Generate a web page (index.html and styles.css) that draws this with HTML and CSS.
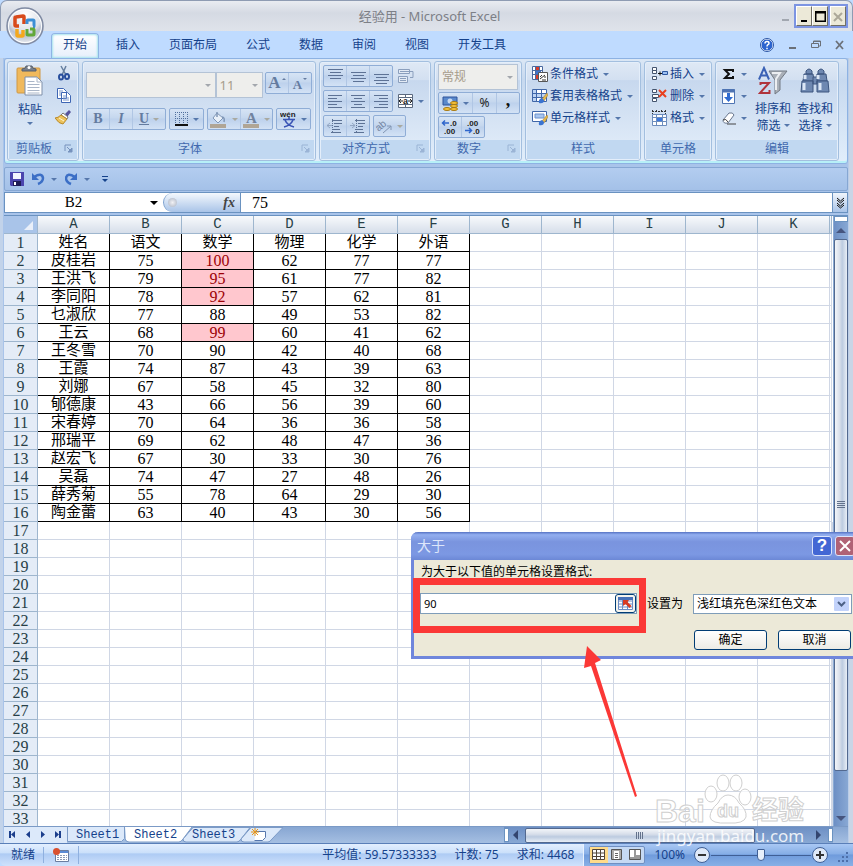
FILE: index.html
```html
<!DOCTYPE html>
<html lang="zh-CN">
<head>
<meta charset="utf-8">
<title>经验用 - Microsoft Excel</title>
<link rel="stylesheet" href="styles.css">
</head>
<body>
<div class="window">
<header class="titlebar">
  <h1>经验用 - Microsoft Excel</h1>
  <span class="dash"></span>
  <div class="winbtns">
    <button aria-label="最小化"><svg width="14" height="18"><path d="M4 13h6v2H4z"/></svg></button>
    <button aria-label="最大化"><svg width="14" height="18"><path d="M2 4h11v11H2zM3.500 6.500v7h8v-7z" fill-rule="evenodd"/></svg></button>
    <button class="off" aria-label="关闭"><svg width="14" height="18"><path d="M3 6l8 8M11 6l-8 8" stroke="#aca899" stroke-width="2"/></svg></button>
  </div>
</header>
<button class="office" aria-label="Office 按钮"><svg width="38" height="38" viewBox="0 0 38 38">
  <defs><radialGradient id="orb" cx=".5" cy=".2" r=".9"><stop offset="0" stop-color="#fff"/><stop offset=".5" stop-color="#dfe3ea"/><stop offset=".62" stop-color="#b9c1d0"/><stop offset="1" stop-color="#fff"/></radialGradient></defs>
  <circle cx="19" cy="19" r="18" fill="url(#orb)" stroke="#808ba3" stroke-width="1.500"/><circle cx="19" cy="19" r="16.500" fill="none" stroke="#fff"/>
  <g fill="none" stroke-width="3.500"><path d="M18 17v-7q0-1-1-1l-7 1q-1 0-1 1v7q0 1 1 1h3" stroke="#d84a1b"/><path d="M21 17v-3q0-1 1-1h5q1 0 1 1v5q0 1-1 1" stroke="#3b8fd6" stroke-width="3"/><path d="M11 22v6q0 1 1 1h4q1 0 1-1v-5" stroke="#f5a81c"/><path d="M21 22v5q0 1 1 1h5q1 0 1-1v-4q0-1-1-1h-3" stroke="#62a83a" stroke-width="3"/></g></svg></button>
<nav class="tabs">
  <a class="on" href="#">开始</a><a href="#">插入</a><a href="#">页面布局</a><a href="#">公式</a><a href="#">数据</a><a href="#">审阅</a><a href="#">视图</a><a href="#">开发工具</a>
  <span class="grow"></span>
  <div class="docbtns">
    <button aria-label="帮助"><svg width="14" height="14"><circle cx="7" cy="7" r="6" fill="#2c64cf" stroke="#fff"/><circle cx="7" cy="7" r="6.500" fill="none" stroke="#2b56a5"/><path d="M5 5.500q0-2 2-2t2 1.700q0 1-1 1.500T7 8.500M7 9.800v1.500" fill="none" stroke="#fff" stroke-width="1.500"/></svg></button>
    <button aria-label="最小化工作簿"><svg width="10" height="12"><path d="M2 8h7v2H2z" fill="#6b7078"/></svg></button>
    <button aria-label="还原工作簿"><svg width="12" height="12"><path d="M3.500 4.500V2h7v5H8.500M1.500 4.500h7v4h-7zM3 2.500h8" fill="none" stroke="#6b7078"/></svg></button>
    <button aria-label="关闭工作簿"><svg width="10" height="12"><path d="M1 2l7 8M8 2l-7 8" stroke="#6b7078" stroke-width="1.800"/></svg></button>
  </div>
</nav>
<main class="frame">
<div class="ribbon">
  <section class="group g-clip"><div class="body row">
    <button class="big paste"><svg width="28" height="32" viewBox="0 0 28 32"><rect x="1" y="3" width="23" height="25" rx="1" fill="#f0b95c" stroke="#cf9845"/><path d="M6 6h14V4q-4 0-4-3h-6q0 3-4 3z" fill="#777f8b" stroke="#555e6c"/><circle cx="13" cy="2.500" r="1.500" fill="#fff"/><path d="M9 12h12l5 5v13H9z" fill="#fff" stroke="#7f8fa9"/><path d="M21 12v5h5M11.500 16.500h7M11.500 19.500h12M11.500 22.500h12M11.500 25.500h12M11.500 28h12" fill="none" stroke="#aab6c8"/></svg><span>粘贴</span><i class="car"></i></button>
    <div class="col cliptools">
      <button aria-label="剪切"><svg width="14" height="16"><path d="M4 1l5 9M9 1L5 10" stroke="#667f9f" stroke-width="1.500"/><g fill="none" stroke="#294f9d" stroke-width="2"><ellipse cx="4" cy="12" rx="2" ry="2.500"/><ellipse cx="10" cy="11.500" rx="2" ry="2.500"/></g></svg></button>
      <button aria-label="复制"><svg width="16" height="16"><path d="M1.500 1.500h6l3 3v7h-9zM5.500 5.500h6l3 3v7h-9z" fill="#fff" stroke="#3e66b4"/><path d="M3 4h4M3 6h2M3 8h2M7 9h4M7 11h6M7 13h6" stroke="#7a97cc"/></svg></button>
      <button aria-label="格式刷"><svg width="17" height="16"><path d="M10 5l4-4 2 2-4 5z" fill="#56549c"/><path d="M8 4l5 4-1 2-6-4z" fill="#fff" stroke="#777"/><path d="M6 6l6 4-4 5q-4 0-8-6 3 0 6-3z" fill="#ecc35e" stroke="#b98a2b"/><path d="M4 9l5 3" stroke="#fff6d0"/></svg></button>
    </div></div><footer>剪贴板<svg class="launch" width="9" height="9"><path d="M1 7V1h6" fill="none" stroke="#7692bd"/><path d="M3 3l3 3M8 4v4H4z" fill="#7692bd" stroke="#7692bd"/></svg></footer></section>
  <section class="group g-font"><div class="body col fontrows">
    <div class="row"><label class="combo ff"><select disabled aria-label="字体"><option></option></select></label><label class="combo fs"><select disabled aria-label="字号"><option>11</option></select></label>
      <div class="set push"><button aria-label="增大字号"><b class="ser a1">A</b><i class="tip up1"></i></button><button aria-label="减小字号"><b class="ser a2">A</b><i class="tip dn1"></i></button></div></div>
    <div class="row g3"><div class="set"><button class="ser" aria-label="加粗"><b>B</b></button><button class="ser" aria-label="倾斜"><i>I</i></button><button class="ser wide" aria-label="下划线"><u>U</u><i class="car dim"></i></button></div>
      <div class="set"><button class="w34" aria-label="边框"><svg width="14" height="14"><path d="M.5 0v12M4.500 0v12M8.500 0v12M12.500 0v12M0 .5h13M0 6.500h13" stroke="#51709c" stroke-dasharray="1 1"/><path d="M0 13h13" stroke="#111" stroke-width="2"/></svg><i class="car"></i></button></div>
      <div class="set"><button class="w33" aria-label="填充颜色"><svg width="17" height="17"><path d="M7 2l6 5-5 5-5-5z" fill="#e9f0f8" stroke="#8097b7"/><path d="M7 1v5M12 6q3 0 2 5" fill="none" stroke="#8097b7" stroke-width="1.500"/><path d="M0 13h16v4H0z" fill="#b0a595"/></svg><i class="car dim"></i></button><button class="w33" aria-label="字体颜色"><svg width="16" height="17"><path d="M0 13h16v4H0z" fill="#b0a595"/><text x="3" y="12" class="sa">A</text></svg><i class="car dim"></i></button></div>
      <div class="set"><button class="w34" aria-label="拼音指南"><svg width="17" height="19"><text x="0" y="7" class="wen">wén</text><path d="M3 9.500h12M9 7v2M13 10q-2 5-9 7M5 10q2 5 9 7" fill="none" stroke="#3953b4" stroke-width="1.600"/></svg><i class="car"></i></button></div></div>
    </div><footer>字体<svg class="launch dim" width="9" height="9"><path d="M1 7V1h6" fill="none" stroke="#7692bd"/><path d="M3 3l3 3M8 4v4H4z" fill="#7692bd" stroke="#7692bd"/></svg></footer></section>
  <section class="group g-align"><div class="body col alignrows">
    <div class="row g5"><div class="set"><button aria-label="顶端对齐"><svg width="15" height="14"><path d="M0 .5h15M2 3.500h11M0 6.500h15M2 9.500h11" stroke="#5d7295"/></svg></button><button aria-label="垂直居中"><svg width="15" height="14"><path d="M0 3.500h15M2 6.500h11M0 9.500h15M2 12.500h11" stroke="#5d7295"/></svg></button><button aria-label="底端对齐"><svg width="15" height="16"><path d="M0 6.500h15M2 9.500h11M0 12.500h15M2 15.500h11" stroke="#5d7295"/></svg></button></div>
      <button class="bare" aria-label="自动换行"><svg width="17" height="16"><path d="M.5 1.500h11v4H.5zM.5 8.500h9v6h-9z" fill="#e4ebf5" stroke="#8b9fbd"/><path d="M2 3.500h13v6h-3M2 10.500h6M2 12.500h6" fill="none" stroke="#8b9fbd"/></svg></button></div>
    <div class="row g5"><div class="set"><button aria-label="左对齐"><svg width="15" height="14"><path d="M0 1.500h14M0 4.500h9M0 7.500h14M0 10.500h9M0 13.500h14" stroke="#5d7295"/></svg></button><button aria-label="居中"><svg width="15" height="14"><path d="M0 1.500h14M3 4.500h8M0 7.500h14M3 10.500h8M0 13.500h14" stroke="#5d7295"/></svg></button><button aria-label="右对齐"><svg width="15" height="14"><path d="M0 1.500h14M5 4.500h9M0 7.500h14M5 10.500h9M0 13.500h14" stroke="#5d7295"/></svg></button></div>
      <button class="bare" aria-label="合并后居中"><svg width="16" height="16"><path d="M.5 1.500h14v13H.5zM7.500 1v3M7.500 12v3" fill="#fff" stroke="#5c6a80"/><path d="M0 4.500h15M0 11.500h15" stroke="#5c6a80"/><text x="5" y="11" class="t9">a</text><path d="M1 8h4M10 8h4M3 6L1 8l2 2M12 6l2 2-2 2" stroke="#222" fill="none"/></svg><i class="car"></i></button></div>
    <div class="row g3"><div class="set"><button aria-label="减少缩进"><svg width="16" height="14"><path d="M5 1.500h10M7 4.500h8M7 7.500h5M5 10.500h8M4 13.500h10" stroke="#5d7295"/><path d="M0 6.500h5M3 4L0 6.500 3 9" fill="none" stroke="#93a7c4"/><path d="M5.500 0v14" stroke="#5d7295" stroke-dasharray="1 1"/></svg></button><button aria-label="增加缩进"><svg width="16" height="14"><path d="M5 1.500h10M8 4.500h7M8 7.500h5M5 10.500h8M4 13.500h10" stroke="#5d7295"/><path d="M0 6.500h5M2 4l3 2.500L2 9" fill="none" stroke="#93a7c4"/><path d="M6.500 0v14" stroke="#5d7295" stroke-dasharray="1 1"/></svg></button></div>
      <div class="set"><button class="w31" aria-label="方向"><svg width="17" height="18"><text x="0" y="12" class="rot">ab</text><path d="M7 16l8-7M15 13V9h-4" fill="none" stroke="#8296b3"/></svg><i class="car dim"></i></button></div></div>
    </div><footer>对齐方式<svg class="launch dim" width="9" height="9"><path d="M1 7V1h6" fill="none" stroke="#7692bd"/><path d="M3 3l3 3M8 4v4H4z" fill="#7692bd" stroke="#7692bd"/></svg></footer></section>
  <section class="group g-num"><div class="body col numrows">
    <label class="combo nf"><select disabled aria-label="数字格式"><option>常规</option></select></label>
    <div class="row"><div class="set"><button class="w34" aria-label="会计数字格式"><svg width="17" height="17"><path d="M1 2h14v8H1z" fill="#5a89cc" stroke="#2f559a"/><circle cx="8" cy="6" r="2.500" fill="#c8daf2"/><g fill="#f6c33c" stroke="#a67812"><ellipse cx="12" cy="8" rx="3.500" ry="1.500"/><ellipse cx="12" cy="11" rx="3.500" ry="1.500"/><ellipse cx="12" cy="14" rx="3.500" ry="1.500"/><ellipse cx="5" cy="14" rx="3.500" ry="1.500"/></g></svg><i class="car"></i></button><button class="pct">%</button><button class="comma" aria-label="千位分隔">,</button></div></div>
    <div class="row"><div class="set"><button aria-label="增加小数位数"><svg width="18" height="16"><text x="9" y="7" class="t8">.0</text><text x="3" y="15" class="t8">.00</text><path d="M2 4h6M4 1.500L1.500 4 4 6.500" stroke="#2f66cc" fill="none" stroke-width="1.500"/></svg></button><button aria-label="减少小数位数"><svg width="18" height="16"><text x="3" y="7" class="t8">.00</text><text x="9" y="15" class="t8">.0</text><path d="M1 11.500h6M5 9l2.500 2.500L5 14" stroke="#2f66cc" fill="none" stroke-width="1.500"/></svg></button></div></div>
    </div><footer>数字<svg class="launch dim" width="9" height="9"><path d="M1 7V1h6" fill="none" stroke="#7692bd"/><path d="M3 3l3 3M8 4v4H4z" fill="#7692bd" stroke="#7692bd"/></svg></footer></section>
  <section class="group g-style"><div class="body col lines">
    <button><svg width="16" height="16"><path d="M.5.500h10v13H.5zM0 4.500h10M0 8.500h10M3.500 0v13M7.500 0v13" fill="#fff" stroke="#49699f"/><path d="M4 1h3v3H4zM4 9h3v4H4z" fill="#d73c2b"/><path d="M4 5h5v3H4z" fill="#3f72cb"/><path d="M6.500 6.500h9v9h-9z" fill="#fff" stroke="#555"/><path d="M8 11l2-2M8 13l5-4M10 14h4M12 11h2" stroke="#333"/></svg>条件格式<i class="car"></i></button>
    <button><svg width="16" height="16"><path d="M.5 1.500h14v12H.5z" fill="#fff" stroke="#3f66a8"/><path d="M1 2h4v11H1zM5 5h9v4H5z" fill="#bed4f3"/><path d="M0 5.500h14M0 9.500h14M4.500 1v13M9.500 1v13" stroke="#3f66a8"/><path d="M15 5l-5 6 2 2 4-6z" fill="#e7b94c" stroke="#99742a" stroke-width=".5"/><path d="M10 10q-4 1-3 5 5 1 5-3z" fill="#3b74d0"/></svg>套用表格格式<i class="car"></i></button>
    <button><svg width="16" height="16"><path d="M.5 1.500h14v10H.5z" fill="#fff" stroke="#3f66a8"/><path d="M3 4h9v4H3z" fill="#a9c6ef" stroke="#6b91cc"/><path d="M15 5l-5 6 2 2 4-6z" fill="#e7b94c" stroke="#99742a" stroke-width=".5"/><path d="M10 10q-4 1-3 5 5 1 5-3z" fill="#3b74d0"/></svg>单元格样式<i class="car"></i></button>
    </div><footer>样式</footer></section>
  <section class="group g-cells"><div class="body col lines">
    <button><svg width="17" height="14"><path d="M1.500.500h4v3h-4zM1.500 9.500h4v3h-4zM1.500 3.500h4v3h-4z" fill="#fff" stroke="#44546e"/><path d="M7 6.500h4M9 4.500v4" stroke="#111" fill="none"/><path d="M11.500 4.500h5v3h-5z" fill="#9dc0f2" stroke="#2d579f"/></svg>插入<i class="car"></i></button>
    <button><svg width="17" height="14"><path d="M1.500.500h4v3h-4zM1.500 9.500h4v3h-4zM1.500 5.500h6v3h-6z" fill="#fff" stroke="#44546e"/><path d="M8 1l7 7M15 1L8 8" stroke="#e8401f" stroke-width="2"/></svg>删除<i class="car"></i></button>
    <button><svg width="17" height="16"><path d="M1 1.500h14M1.500 0v4M5.500 0v3M10.500 0v3M14.500 0v4" stroke="#333" stroke-dasharray="2 1"/><path d="M1.500 4.500h14v11h-14zM2 7.500h13M2 11.500h13M5.500 5v10M11.500 5v10" fill="#fff" stroke="#6d8dbd"/><path d="M6 8h5v3H6z" fill="#3c78dc"/></svg>格式<i class="car"></i></button>
    </div><footer>单元格</footer></section>
  <section class="group g-edit"><div class="body row">
    <div class="col lines tight"><button aria-label="求和"><svg width="14" height="14"><path d="M11 5V3H3l4 4-4 4h8V9" fill="none" stroke="#111" stroke-width="2"/></svg><i class="car"></i></button><button aria-label="填充"><svg width="14" height="15"><path d="M.5.500h12v14H.5z" fill="#fff" stroke="#4f74b3"/><path d="M0 2h13" stroke="#4f74b3" stroke-width="3"/><path d="M5 4h3v4h3l-4.500 5L2 8h3z" fill="#2f6bd0"/></svg><i class="car"></i></button><button aria-label="清除"><svg width="14" height="14"><path d="M1 9l6-7q4-1 5 2l-6 8q-5 1-5-3z" fill="#fff" stroke="#68768e"/><path d="M1 9q3-2 5 2M5 13h9" fill="none" stroke="#444"/></svg><i class="car"></i></button></div>
    <button class="big"><svg width="30" height="30"><path d="M11 5h18l-7 9v10l-5 4V14z" fill="#aab0b8" stroke="#737a84"/><path d="M14 7h8l-4 6v11" fill="none" stroke="#eceef1" stroke-width="2"/><g fill="none" stroke-width="2"><path d="M1 13.500L6 2l5 11.500M3 9.500h6" stroke="#3b62b5"/><path d="M2.500 19V17H11L2 27h9.500v-3" stroke="#b0343c"/></g></svg><span>排序和<br>筛选 <i class="car"></i></span></button>
    <button class="big"><svg width="30" height="30"><g fill="#6e88b1" stroke="#3c557e"><path d="M6 5q3-4 6 0v3H6zM18 5q3-4 6 0v3h-6zM4 8h9l1 7H3zM17 8h9l1 7H16z"/><path d="M2 15h11v11H1zM17 15h11l1 11H17zM13 11h4v7h-4z"/></g><path d="M5 9v4M18 9v4M4 17v7M20 17v7" stroke="#dbe6f5" stroke-width="3"/></svg><span>查找和<br>选择 <i class="car"></i></span></button>
    </div><footer>编辑</footer></section>
</div>
<div class="qat">
  <button aria-label="保存"><svg width="14" height="14"><path d="M0 0h14v14H1l-1-1z" fill="#4b45ae"/><path d="M3 1h8v6H3z" fill="#f4f6ff"/><path d="M3 9h8v5H3z" fill="#1f1c55"/><path d="M4 10h2v3H4z" fill="#fff"/></svg></button>
  <button aria-label="撤消"><svg width="13" height="14"><path d="M2 5q8-5 9 1 0 4-5 6" fill="none" stroke="#3c6fc6" stroke-width="2.500"/><path d="M0 1v7h7z" fill="#3c6fc6"/></svg></button><i class="car"></i>
  <button aria-label="恢复"><svg width="13" height="14"><path d="M10 5Q2 0 1 6q0 4 5 6" fill="none" stroke="#3c6fc6" stroke-width="2.500"/><path d="M12 1v7H5z" fill="#3c6fc6"/></svg></button><i class="car"></i>
  <button class="more" aria-label="自定义快速访问工具栏"><i class="car dark"></i></button>
</div>
<div class="fbar">
  <label class="namebox"><input aria-label="名称框" value="B2"><i class="car blk"></i></label>
  <button class="fx" aria-label="插入函数"><i class="dot"></i><em>fx</em></button>
  <input class="formula" aria-label="编辑栏" value="75">
  <button class="expand" aria-label="展开编辑栏"><svg width="9" height="12"><path d="M1 1l3.500 3L8 1M1 3l3.500 3L8 3M1 6l3.500 3L8 6M1 8l3.500 3L8 8" fill="none" stroke="#111"/></svg></button>
</div>
<div class="work">
<div class="sheet">
<table>
<colgroup><col class="cn"><col class="c"><col class="c"><col class="c"><col class="c"><col class="c"><col class="c"><col class="c"><col class="c"><col class="c"><col class="c"><col class="c"><col></colgroup>
<thead><tr><th class="corner"><svg width="10" height="10"><path d="M9 0v9H0z" fill="#e9eff9"/></svg></th><th>A</th><th>B</th><th>C</th><th>D</th><th>E</th><th>F</th><th>G</th><th>H</th><th>I</th><th>J</th><th>K</th><th></th></tr></thead>
<tbody class="data">
<tr><th>1<td>姓名<td>语文<td>数学<td>物理<td>化学<td>外语<td><td><td><td><td><td>
<tr><th>2<td>皮桂岩<td>75<td class="hot">100<td>62<td>77<td>77<td><td><td><td><td><td>
<tr><th>3<td>王洪飞<td>79<td class="hot">95<td>61<td>77<td>82<td><td><td><td><td><td>
<tr><th>4<td>李同阳<td>78<td class="hot">92<td>57<td>62<td>81<td><td><td><td><td><td>
<tr><th>5<td>乜淑欣<td>77<td>88<td>49<td>53<td>82<td><td><td><td><td><td>
<tr><th>6<td>王云<td>68<td class="hot">99<td>60<td>41<td>62<td><td><td><td><td><td>
<tr><th>7<td>王冬雪<td>70<td>90<td>42<td>40<td>68<td><td><td><td><td><td>
<tr><th>8<td>王霞<td>74<td>87<td>43<td>39<td>63<td><td><td><td><td><td>
<tr><th>9<td>刘娜<td>67<td>58<td>45<td>32<td>80<td><td><td><td><td><td>
<tr><th>10<td>郇德康<td>43<td>66<td>56<td>39<td>60<td><td><td><td><td><td>
<tr><th>11<td>宋春婷<td>70<td>64<td>36<td>36<td>58<td><td><td><td><td><td>
<tr><th>12<td>邢瑞平<td>69<td>62<td>48<td>47<td>36<td><td><td><td><td><td>
<tr><th>13<td>赵宏飞<td>67<td>30<td>33<td>30<td>76<td><td><td><td><td><td>
<tr><th>14<td>吴磊<td>74<td>47<td>27<td>48<td>26<td><td><td><td><td><td>
<tr><th>15<td>薛秀菊<td>55<td>78<td>64<td>29<td>30<td><td><td><td><td><td>
<tr><th>16<td>陶金蕾<td>63<td>40<td>43<td>30<td>56<td><td><td><td><td><td>
</tbody>
<tbody>
<tr><th>17<td><td><td><td><td><td><td><td><td><td><td><td><td>
<tr><th>18<td><td><td><td><td><td><td><td><td><td><td><td><td>
<tr><th>19<td><td><td><td><td><td><td><td><td><td><td><td><td>
<tr><th>20<td><td><td><td><td><td><td><td><td><td><td><td><td>
<tr><th>21<td><td><td><td><td><td><td><td><td><td><td><td><td>
<tr><th>22<td><td><td><td><td><td><td><td><td><td><td><td><td>
<tr><th>23<td><td><td><td><td><td><td><td><td><td><td><td><td>
<tr><th>24<td><td><td><td><td><td><td><td><td><td><td><td><td>
<tr><th>25<td><td><td><td><td><td><td><td><td><td><td><td><td>
<tr><th>26<td><td><td><td><td><td><td><td><td><td><td><td><td>
<tr><th>27<td><td><td><td><td><td><td><td><td><td><td><td><td>
<tr><th>28<td><td><td><td><td><td><td><td><td><td><td><td><td>
<tr><th>29<td><td><td><td><td><td><td><td><td><td><td><td><td>
<tr><th>30<td><td><td><td><td><td><td><td><td><td><td><td><td>
<tr><th>31<td><td><td><td><td><td><td><td><td><td><td><td><td>
<tr><th>32<td><td><td><td><td><td><td><td><td><td><td><td><td>
<tr><th>33<td><td><td><td><td><td><td><td><td><td><td><td><td>
</tbody>
</table>
</div>
<div class="vscroll"><i class="split"></i><i class="arr up"></i><div class="track"><div class="thumb"><i></i></div></div><i class="arr down"></i></div>
</div>
<div class="sheetbar">
  <div class="navs"><svg width="54" height="9" fill="#1c3f8c"><path d="M0 1h2v7H0zM6 1v7L2 4.500zM21 1v7l-4-3.500zM32 1v7l4-3.500zM46 1v7l4-3.500zM50 1h2v7h-2z"/></svg></div>
  <a class="st" href="#"><svg width="58" height="16"><path d="M.5 0v14.500h54l3-3V0" fill="#dce9fa" stroke="#7b9ac6"/></svg><span>Sheet1</span></a>
  <a class="st on" href="#"><svg width="68" height="16"><path d="M0 0l1 13q1 2 3 2h50q2 0 4-3L67 0z" fill="#fff"/><path d="M0 12q1 3 4 3h50q2 0 4-3L67 0" fill="none" stroke="#7b9ac6"/></svg><span>Sheet2</span></a>
  <a class="st" href="#"><svg width="68" height="16"><path d="M10 .500L0 12q0 3 3 3h51q2 0 4-3L67 .500z" fill="#dce9fa" stroke="#7b9ac6"/></svg><span>Sheet3</span></a>
  <a class="st new" href="#" aria-label="插入工作表"><svg width="42" height="16"><path d="M10 .500L0 12q0 3 3 3h24q2 0 4-3L42 .500z" fill="#dce9fa" stroke="#7b9ac6"/><path d="M14.500 4.500h10v6l-3 3h-8" fill="#fff" stroke="#5677ad"/><path d="M14 1v8M10 5h8M11 2l6 6M17 2l-6 6" stroke="#e4951d"/></svg></a>
  <span class="grow"></span>
  <div class="hscroll"><i class="split"></i><i class="arr left"></i><div class="track"><div class="thumb"><i></i></div></div><i class="arr right"></i><i class="split"></i></div>
</div>
</main>
<footer class="status">
  <span class="ready">就绪</span><span class="macro"><svg width="16" height="14"><path d="M2.500 2.500h13v11h-13z" fill="#fff" stroke="#6a7da0"/><path d="M3 3h12v2H3z" fill="#5b8bd5"/><path d="M4 7.500h10M4 9.500h10M4 11.500h10" stroke="#8a99b5" stroke-dasharray="2 1"/><circle cx="3.500" cy="3.500" r="3.500" fill="#d9502f"/></svg></span>
  <span class="grow"></span>
  <span class="stats"><span>平均值: 59.57333333</span><span>计数: 75</span><span>求和: 4468</span></span>
  <div class="viewzone">
    <div class="views"><button class="on" aria-label="普通"><svg width="14" height="12"><path d="M.5.500h12v10H.5zM0 4h13M0 7.500h13M4.500 0v11M8.500 0v11" fill="#fff" stroke="#53473a"/></svg></button><button aria-label="页面布局"><svg width="12" height="12"><path d="M.5.500h10v10H.5z" fill="#aaa" stroke="#555"/><path d="M3 2h5v8H3z" fill="#fff"/><path d="M4 4.500h3M4 6.500h3M4 8.500h3" stroke="#666"/></svg></button><button aria-label="分页预览"><svg width="13" height="12"><path d="M.5.500h11v10H.5z" fill="#999" stroke="#555"/><path d="M1 1h4v7H1zM7 1h4v5H7z" fill="#fff"/></svg></button></div>
    <span class="pc">100%</span>
    <button aria-label="缩小"><svg width="18" height="18"><circle cx="9" cy="9" r="7.500" fill="#dfe9f8" stroke="#3f5f96"/><path d="M5 9h8" stroke="#333" stroke-width="2"/></svg></button>
    <input type="range" min="10" max="190" value="100" aria-label="显示比例">
    <button aria-label="放大"><svg width="18" height="18"><circle cx="9" cy="9" r="7.500" fill="#dfe9f8" stroke="#3f5f96"/><path d="M5 9h8M9 5v8" stroke="#333" stroke-width="2"/></svg></button>
    <svg class="grip" width="12" height="12" fill="#4d6fa9"><path d="M9 1h2v2H9zM9 5h2v2H9zM9 9h2v2H9zM5 5h2v2H5zM5 9h2v2H5zM1 9h2v2H1z"/></svg>
  </div>
</footer>
<svg class="mark" width="160" height="84"><g fill="#fff" fill-opacity=".75" stroke="#cfcfcf"><ellipse cx="57" cy="28" rx="6" ry="8"/><ellipse cx="69" cy="17" rx="6" ry="8"/><ellipse cx="82" cy="17" rx="6" ry="8"/><ellipse cx="91" cy="31" rx="6" ry="8"/><path d="M74 29q7 0 11 8 8 7 7 14-2 7-18 6-17 1-18-6 0-7 8-14 4-8 10-8z"/><text x="1" y="56" class="m1">Bai</text><text x="63" y="51" class="m2">du</text><text x="98" y="53" class="m3">经验</text></g><text x="3" y="76" class="m4">jingyan.baidu.com</text></svg>
<form class="dialog">
  <header><h2>大于</h2><button type="button" class="q" aria-label="帮助">?</button><button type="button" class="x" aria-label="关闭"><svg width="14" height="14"><path d="M2 2l10 10M12 2L2 12" stroke="#fff" stroke-width="2"/></svg></button></header>
  <div class="dbody"><label for="v">为大于以下值的单元格设置格式:</label>
    <div class="drow"><span class="ref"><input id="v" value="90"><button type="button" aria-label="选取区域"><svg width="16" height="13"><path d="M.5.500h14v12H.5zM0 4h15M0 7h15M0 10h15M4.500 0v12M9.500 0v12" fill="#fff" stroke="#6c8cc4"/><path d="M0 0h15v3H0z" fill="#4670b8"/><path d="M5 3h6L9.500 5l4 4-2 2-4-4L5 9z" fill="#d93a21"/></svg></button></span>
    <label for="f">设置为</label><span class="pick"><select id="f"><option>浅红填充色深红色文本</option></select><svg width="15" height="14"><rect width="15" height="14" rx="1" fill="#c3d3fb"/><path d="M4 5l3.500 3.500L11 5" fill="none" stroke="#4d6185" stroke-width="2"/></svg></span></div>
    <div class="acts"><button type="button">确定</button><button type="button">取消</button></div></div>
</form>
<div class="redbox"></div>
<svg class="pointer" width="58" height="154"><path d="M5 0l14 14-6 3 42 133-2 1L9 20l-7 2z" fill="#fb3836"/></svg>
</div>
</body>
</html>
```
FILE: styles.css
```css
* { box-sizing: border-box; }
body { margin: 0; font: 12px/16px "Noto Sans", "Noto Sans CJK SC", sans-serif; color: #15428b; }
button, input, select { font: inherit; color: inherit; margin: 0; padding: 0; border: 0; background: none; }
button { display: flex; align-items: center; justify-content: center; }
svg { display: block; flex: none; }
a { color: inherit; text-decoration: none; }
h1, h2 { margin: 0; font-weight: 400; font-size: 12px; }
i { flex: none; }
.row { display: flex; }
.col { display: flex; flex-direction: column; }
.grow { flex: 1; }
.g3 { gap: 3px; }
.g5 { gap: 5px; }
.window { position: relative; height: 100vh; display: flex; flex-direction: column; overflow: hidden; background: #bfdbff; }
.car { display: inline-block; width: 0; height: 0; border: 3px solid transparent; border-top-color: #5577ab; border-bottom: 0; }
.big span .car { vertical-align: 3px; }
.car.dim { border-top-color: #a9a9a0; }
.car.blk { border-width: 4px; border-bottom: 0; border-top-color: #000; }

.titlebar { height: 31px; flex: none; display: flex; align-items: center; border: 1px solid #8e9bb2; border-bottom: 0; border-radius: 7px 7px 0 0; background: linear-gradient(#e9ecf1, #d5dae3 40%, #dfe3ea); padding-right: 4px; }
.titlebar h1 { flex: 1; text-align: center; color: #7d8087; font-size: 13px; padding-left: 76px; }
.dash { width: 7px; height: 2px; background: #a2a7b0; margin: 8px 5px 0 0; }
.winbtns { display: flex; border: 2px solid #7c94e2; background: #7c94e2; }
.winbtns button { width: 16px; height: 20px; background: #ece9d8; border: 1px solid #fff; border-right-color: #716f64; border-bottom-color: #716f64; }
.winbtns .off { margin-left: 2px; }
.office { position: absolute; left: 6px; top: 7px; z-index: 2; }

.tabs { height: 27px; flex: none; display: flex; align-items: stretch; gap: 7px; padding: 2px 8px 0 52px; }
.tabs a { padding: 3px 11px; border: 1px solid transparent; border-bottom: 0; border-radius: 4px 4px 0 0; margin: 0 -1px; }
.tabs .on { background: linear-gradient(#fff, #e6effb); border-color: #8fb4e4; box-shadow: inset 0 0 2px 1px #a8e4ee; }
.docbtns { display: flex; align-items: center; gap: 13px; padding-bottom: 2px; }

.frame { flex: 1; min-height: 0; display: flex; flex-direction: column; padding: 0 5px 0 4px; background: linear-gradient(90deg, #c2d3ea 3px, #a9c4ea 3px, #a9c4ea calc(100% - 5px), #c9d5e6 calc(100% - 4px)); }
.ribbon { flex: none; display: flex; gap: 3px; height: 106px; padding: 2px; border: 1px solid #8db2e3; border-radius: 3px; background: linear-gradient(#dbe7f5, #c7d9ef 20%, #e2eefb); box-shadow: inset 0 -2px #b7f0f8; }
.group { flex: none; height: 100px; display: flex; flex-direction: column; border: 1px solid #a3bfdf; border-radius: 3px; box-shadow: inset 0 0 0 1px #e4eefa; background: linear-gradient(#dfe9f5, #d3e0f1 18%, #c7d8ee 19%, #dde9f7 80%); overflow: hidden; }
.group .body { flex: 1; }
.group footer { height: 19px; margin: 0 1px 1px; position: relative; text-align: center; line-height: 18px; color: #4069ae; background: #c1d8f1; padding-right: 18px; }
.group.g-style footer, .group.g-cells footer, .group.g-edit footer { padding-right: 0; }
.launch { position: absolute; right: 4px; top: 4px; }
.launch.dim { opacity: .5; }
.g-clip { width: 72px; }
.g-font { width: 234px; }
.g-align { width: 112px; }
.g-num { width: 88px; }
.g-style { width: 116px; }
.g-cells { width: 68px; }
.g-edit { width: 124px; }
.big { flex-direction: column; justify-content: flex-start; width: 42px; padding-top: 4px; line-height: 17px; gap: 4px; text-align: center; }
.paste { width: 44px; padding-top: 3px; }
.cliptools { gap: 6px; padding: 3px 0 0 3px; }
.fontrows { padding: 10px 3px 0; gap: 10px; }
.alignrows { padding: 3px 3px 0; gap: 3px; }
.numrows { padding: 2px 3px 0; gap: 2px; }
.combo { position: relative; height: 26px; border: 1px solid #b4c3d6; background: #eeeeec; display: flex; }
.combo::after { content: ""; position: absolute; right: 4px; top: 11px; border: 3px solid transparent; border-top-color: #a3a7ad; border-bottom: 0; }
.combo select { appearance: none; width: 100%; padding-left: 3px; color: #a69c8b; opacity: 1; font-size: 12px; }
.ff { width: 131px; }
.fs { width: 48px; }
.combo.fs select { font-size: 13px; }
.nf { width: 80px; }
.push { margin-left: 2px; }
.set { height: 22px; display: flex; border: 1px solid #8fadd6; border-radius: 2px; background: linear-gradient(#d6e4f5, #c5d7ee 45%, #bdd1ec 50%, #d3e2f5); }
.set button { width: 22px; gap: 4px; }
.set button + button { border-left: 1px solid #b0c6e4; width: 23px; }
.set .wide, .set button.wide { width: 33px; }
.set .w34 { width: 33px; }
.set .w33, .set button.w33 { width: 32px; gap: 5px; }
.set .w31 { width: 31px; }
.ser { font: bold 14px/20px "Liberation Serif", serif; color: #647b9f; }
.a1 { font-size: 17px; }
.a2 { font-size: 13px; padding-top: 3px; }
.tip { width: 0; height: 0; border: 2px solid transparent; align-self: flex-start; margin: 5px 0 0 -3px; }
.up1 { border-bottom-color: #647b9f; border-top: 0; }
.dn1 { border-top-color: #647b9f; border-bottom: 0; }
.sa { font: bold 15px "Liberation Serif", serif; fill: #71839f; }
.wen { font: bold 8px "Liberation Sans", sans-serif; fill: #222; }
.t8 { font: bold 8px "Liberation Sans", sans-serif; fill: #222; }
.t9 { font: bold 9px "Liberation Sans", sans-serif; fill: #222; }
.rot { font: 10px "Liberation Sans", sans-serif; fill: #71839f; transform: rotate(-40deg); transform-origin: 5px 10px; }
.set .pct { width: 24px; color: #222; }
.set .comma { color: #111; font: bold 18px/12px "Liberation Serif", serif; padding-bottom: 6px; }
.bare { gap: 4px; }
.lines { padding: 4px 0 0 6px; gap: 6px; align-items: flex-start; }
.lines button { height: 16px; gap: 2px; }
.lines .car { margin-left: 3px; }
.tight { width: 36px; }

.qat { flex: none; height: 24px; margin-top: 3px; display: flex; align-items: center; gap: 6px; padding: 0 5px; border: 1px solid #86a7d3; border-radius: 2px; background: linear-gradient(#b3cdf0, #a4c1e8); }
.qat button:nth-of-type(2), .qat button:nth-of-type(3) { margin-left: 2px; }
.more { border-top: 1px solid #15428b; padding-top: 2px; margin-left: 6px; }
.car.dark { border-top-color: #15428b; }
.fbar { flex: none; height: 21px; margin-top: 1px; display: flex; border: 1px solid #6a92c0; background: #fff; color: #000; font: 16px/19px "Liberation Serif", serif; }
.namebox { width: 158px; display: flex; align-items: center; padding-right: 5px; }
.namebox input { flex: 1; min-width: 0; text-align: center; font-size: 15px; padding-right: 8px; }
.fx { width: 77px; border-radius: 10px 0 0 10px; border-left: 1px solid #7fa2cf; background: linear-gradient(#f4f8fd, #a9c4e8); justify-content: space-between; padding: 0 5px 0 4px; color: #444; }
.fx em { font: italic bold 14px "Liberation Serif", serif; }
.dot { width: 9px; height: 9px; border-radius: 50%; background: radial-gradient(#f1f1f4, #a9b2c2); }
.formula { flex: 1; min-width: 0; border-left: 1px solid #6a92c0; padding-left: 11px; }
.expand { width: 15px; border-left: 1px solid #6a92c0; background: linear-gradient(#f0f5fc, #a9c4e8); }

.work { flex: 1; min-height: 0; margin-top: 2px; display: flex; border-top: 1px solid #6a92c0; }
.sheet { flex: 1; min-width: 0; overflow: hidden; background: #fff; }
table { width: 100%; table-layout: fixed; border-collapse: separate; border-spacing: 0; color: #000; font: 16px/17px "Liberation Serif", "Noto Sans CJK SC", serif; }
.cn { width: 34px; }
.c { width: 72px; }
tr { height: 18px; }
th, td { height: 18px; padding: 0; text-align: center; font-weight: 400; border-right: 1px solid #d0d7e5; border-bottom: 1px solid #d0d7e5; overflow: hidden; }
td:nth-child(2) { font-size: 15px; }
.data tr:first-child td { font-size: 15px; }
th { background: #e4ecf7; color: #273f47; border-color: #9eb6ce; }
thead th { background: linear-gradient(#f8fafc, #d6deea); font-family: "Liberation Mono", monospace; font-size: 14px; line-height: 17px; }
.corner { background: #a9c4e9; }
.corner svg { margin: 3px 3px 0 auto; }
.data td:nth-child(-n+7) { border-color: #000; }
td.hot { background: #ffc7ce; color: #9c0006; }

.vscroll { width: 15px; flex: none; display: flex; flex-direction: column; background: linear-gradient(90deg, #6d8fc4, #88a8d4); border-left: 1px solid #8aaad4; }
.vscroll .split { height: 6px; border: 1px solid #6a92c0; background: #fff; }
.arr { width: 0; height: 0; border: 5px solid transparent; }
.up { border-bottom-color: #46557e; border-top: 0; margin: 6px 2px; }
.down { border-top-color: #46557e; border-bottom: 0; margin: 5px 2px; }
.vscroll .track { flex: 1; }
.vscroll .thumb { height: 93%; border: 1px solid #53698f; border-radius: 2px; background: linear-gradient(90deg, #f2f5f9, #d7deea 40%, #bccbe0 60%, #e8eef6); display: flex; align-items: center; justify-content: center; }
.vscroll .thumb i { width: 8px; height: 8px; background: repeating-linear-gradient(#63728c 0 1px, #fff0 1px 2px); }
.sheetbar { flex: none; height: 17px; display: flex; background: linear-gradient(#87a6d2, #a5bfe2); border-top: 1px solid #7b9ac6; }
.navs { width: 63px; background: #dce9fa; padding: 3px 5px; }
.st { position: relative; width: 58px; height: 16px; font: 12px/16px "Liberation Mono", monospace; }
.st svg { position: absolute; left: 0; top: 0; }
.st span { position: relative; padding-left: 9px; }
.st.on { z-index: 1; }
.st.new { width: 42px; }
.hscroll { width: 39%; margin-right: 15px; display: flex; align-items: center; background: linear-gradient(#6d8fc4, #88a8d4); }
.hscroll .split { width: 5px; height: 14px; border: 1px solid #6a92c0; background: #fff; }
.left { border-right-color: #33456f; border-left: 0; margin: 0 7px 0 4px; }
.right { border-left-color: #33456f; border-right: 0; margin: 0 7px 0 3px; }
.hscroll .track { flex: 1; height: 15px; }
.hscroll .thumb { width: 80%; height: 15px; border: 1px solid #53698f; border-radius: 2px; background: linear-gradient(#f2f5f9, #d7deea 40%, #bccbe0 60%, #e8eef6); display: flex; align-items: center; justify-content: center; }
.hscroll .thumb i { width: 8px; height: 7px; background: repeating-linear-gradient(90deg, #63728c 0 1px, #fff0 1px 2px); }

.status { flex: none; height: 23px; display: flex; align-items: center; border-top: 1px solid #5a7fb8; border-radius: 0 0 6px 6px; background: linear-gradient(#e3efff, #cbe0fa 40%, #aecbf4 45%, #cfe2fc); }
.ready { padding: 0 8px 0 11px; border-right: 1px solid #8fb0df; }
.macro { padding: 2px 9px; border-right: 1px solid #8fb0df; }
.stats { display: flex; gap: 18px; padding-right: 9px; }
.viewzone { height: 100%; flex: none; display: flex; align-items: center; padding: 0 4px 0 5px; border-left: 1px solid #e9f2ff; background: linear-gradient(#a9c8f4, #86aee6 45%, #6f9bdc 50%, #88b0e6); }
.views { display: flex; border: 1px solid #6f8fc2; border-radius: 2px; background: #c5d9f3; }
.views button { width: 18px; height: 16px; }
.views .on { background: #ffdb8a; }
.pc { padding: 0 8px 0 9px; }
input[type=range] { appearance: none; width: 100px; height: 16px; background: linear-gradient(#3f5f96, #3f5f96) center/100% 1px no-repeat; }
input[type=range]::-webkit-slider-thumb { appearance: none; width: 8px; height: 12px; border: 1px solid #3f5f96; background: #e8f0fb; border-radius: 1px 1px 4px 4px; }
.grip { margin-left: 8px; align-self: flex-end; margin-bottom: 3px; }

.dialog { position: absolute; left: 411px; top: 532px; width: 450px; color: #000; border: 3px solid #6f86dc; border-top: 0; border-radius: 7px 7px 0 0; background: #ece9d8; }
.dialog header { height: 28px; margin: 0 -3px; display: flex; align-items: center; gap: 3px; padding: 0 6px; border-radius: 7px 7px 0 0; background: linear-gradient(#5673c4, #93aff0 10%, #7a94de 35%, #7c98e3 80%, #6c88d6); }
.dialog h2 { flex: 1; color: #dde6fb; font-size: 14px; }
.dialog header button { width: 20px; height: 20px; border: 1px solid #dbe4fb; border-radius: 3px; }
.dialog .q { background: #4367d4; color: #fff; font: bold 17px/18px "Liberation Sans", sans-serif; }
.dialog .x { background: #b06275; }
.dbody { padding: 4px 5px 6px 7px; }
.dbody label { display: block; }
.drow { display: flex; align-items: center; gap: 10px; padding: 13px 0 16px; }
.ref { width: 217px; display: flex; border: 1px solid #7f9db9; background: #fff; margin-left: -1px; }
.ref input { flex: 1; min-width: 0; padding-left: 3px; font-size: 11px; }
.ref button { width: 21px; height: 19px; border: 1px solid #003c74; border-radius: 3px; background: #f4f3ee; }
.pick { position: relative; width: 159px; height: 20px; border: 1px solid #7f9db9; background: #fff; display: flex; }
.pick select { appearance: none; width: 100%; padding-left: 3px; }
.pick svg { position: absolute; right: 2px; top: 2px; }
.acts { display: flex; justify-content: flex-end; gap: 11px; padding-right: 2px; }
.acts button { width: 73px; height: 20px; border: 1px solid #003c74; border-radius: 3px; background: linear-gradient(#fff, #ecebe5); }
.redbox { position: absolute; left: 413px; top: 578px; width: 233px; height: 55px; border: 7px solid #fb3836; }
.pointer { position: absolute; left: 582px; top: 646px; }
.mark { position: absolute; left: 654px; top: 766px; }
.m1 { font: bold 32px "Liberation Sans", sans-serif; }
.m2 { font: bold 18px "Liberation Sans", sans-serif; }
.m3 { font: bold 26px "Noto Sans CJK SC", sans-serif; }
.m4 { font: 17px "Noto Sans", sans-serif; fill: #fff; fill-opacity: .85; }
```
